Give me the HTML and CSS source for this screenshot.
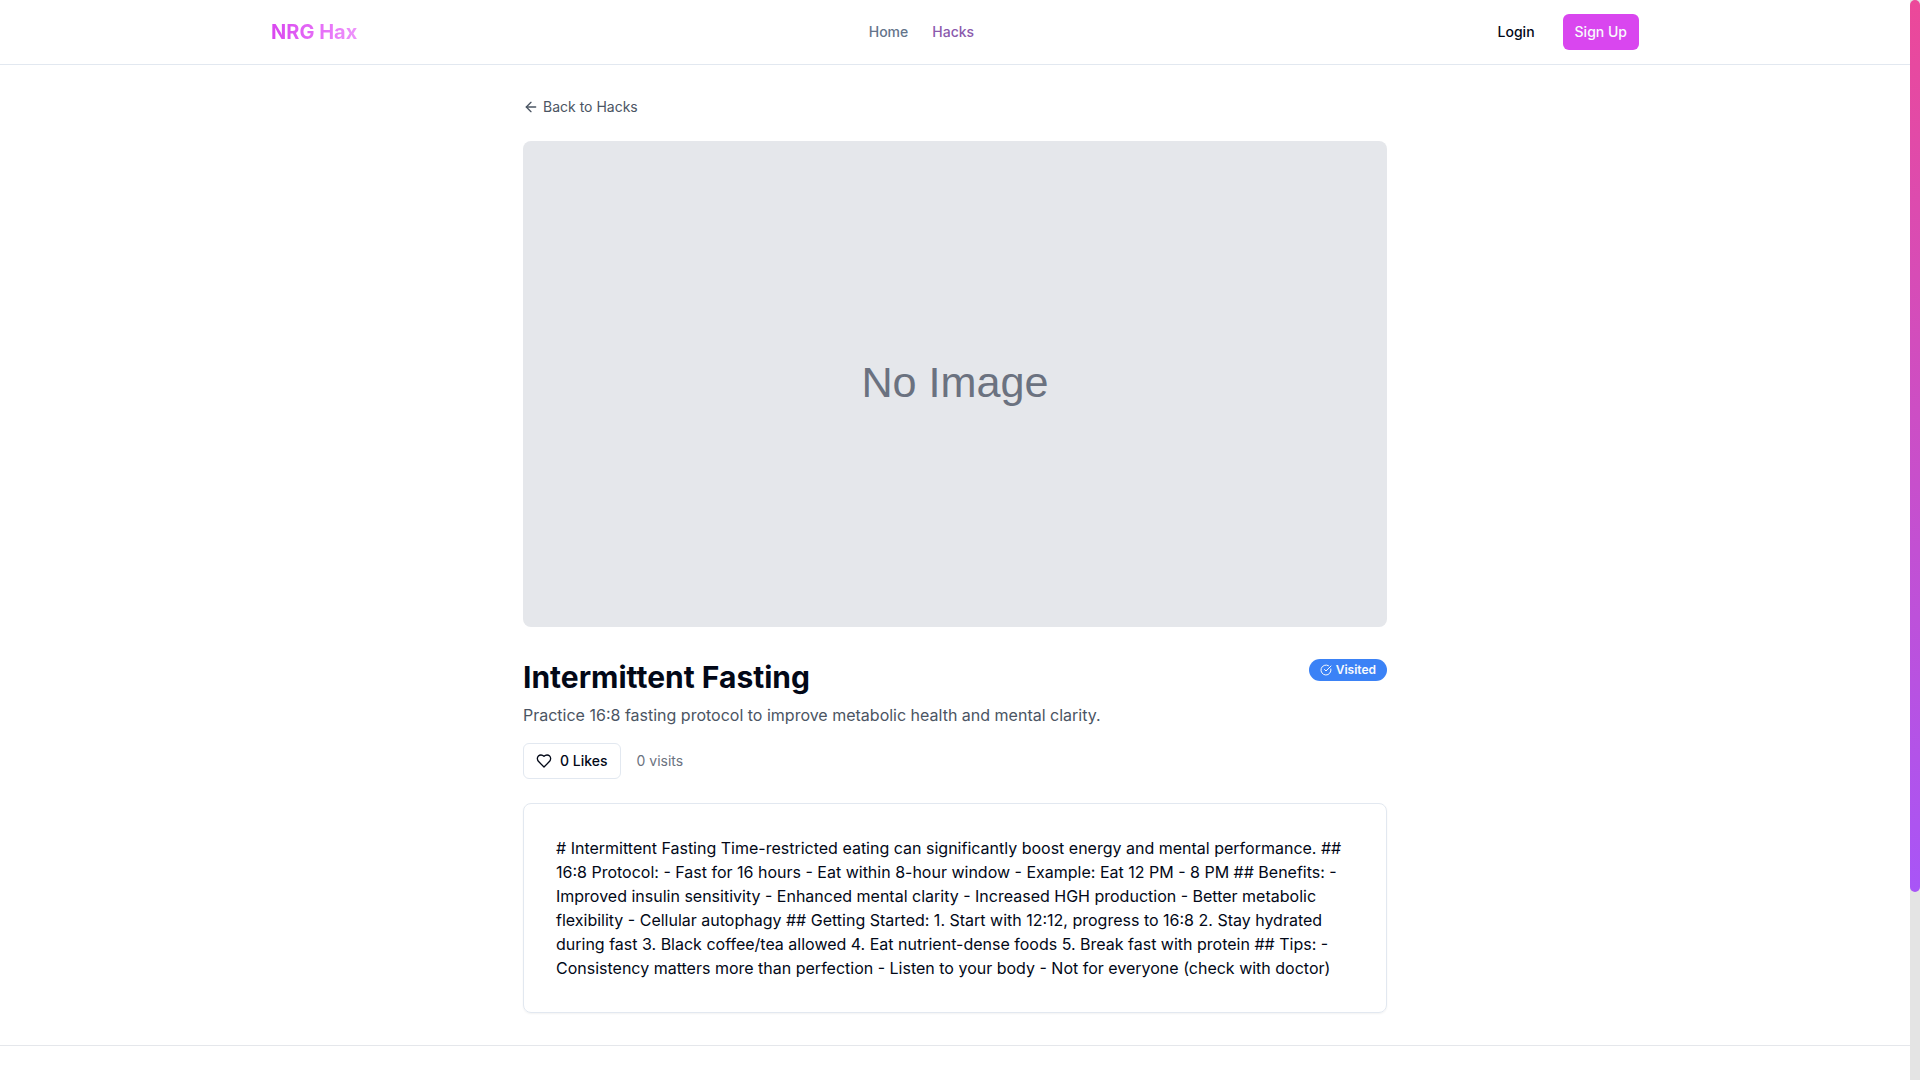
FILE: index.html
```html
<!DOCTYPE html>
<html lang="en">
<head>
  <meta charset="utf-8">
  <meta name="viewport" content="width=device-width, initial-scale=1">
  <title>Intermittent Fasting - NRG Hax</title>
  <link rel="stylesheet" href="styles.css">
</head>
<body>
  <div class="page">
    <header class="site-header">
      <div class="header-inner">
        <a class="logo" href="#">NRG Hax</a>
        <nav class="nav">
          <a class="nav-link" href="#">Home</a>
          <a class="nav-link nav-link-active" href="#">Hacks</a>
        </nav>
        <div class="account">
          <button class="btn btn-ghost" type="button">Login</button>
          <button class="btn btn-primary" type="button">Sign Up</button>
        </div>
      </div>
    </header>

    <main class="content">
      <a class="back-link" href="#">
        <svg class="icon" viewBox="0 0 24 24" aria-hidden="true"><path d="m12 19-7-7 7-7"/><path d="M19 12H5"/></svg>
        Back to Hacks
      </a>

      <svg class="cover" viewBox="0 0 800 450" role="img" aria-label="No Image">
        <rect width="800" height="450" fill="#e5e7eb"/>
        <text class="cover-text" x="400" y="225" dy="12" text-anchor="middle">No Image</text>
      </svg>

      <div class="title-row">
        <div class="title-block">
          <h1 class="title">Intermittent Fasting</h1>
          <p class="summary">Practice 16:8 fasting protocol to improve metabolic health and mental clarity.</p>
        </div>
        <span class="badge">
          <svg class="icon icon-small" viewBox="0 0 24 24" aria-hidden="true"><path d="M21.801 10A10 10 0 1 1 17 3.335"/><path d="m9 11 3 3L22 4"/></svg>
          Visited
        </span>
      </div>

      <div class="stats">
        <button class="btn btn-outline" type="button">
          <svg class="icon" viewBox="0 0 24 24" aria-hidden="true"><path d="M19 14c1.49-1.46 3-3.21 3-5.5A5.5 5.5 0 0 0 16.5 3c-1.76 0-3 .5-4.5 2-1.5-1.5-2.74-2-4.5-2A5.5 5.5 0 0 0 2 8.5c0 2.3 1.5 4.05 3 5.5l7 7Z"/></svg>
          0 Likes
        </button>
        <span class="visits">0 visits</span>
      </div>

      <article class="card">
        <p class="card-text"># Intermittent Fasting Time-restricted eating can significantly boost energy and mental performance. ## 16:8 Protocol: - Fast for 16 hours - Eat within 8-hour window - Example: Eat 12 PM - 8 PM ## Benefits: - Improved insulin sensitivity - Enhanced mental clarity - Increased HGH production - Better metabolic flexibility - Cellular autophagy ## Getting Started: 1. Start with 12:12, progress to 16:8 2. Stay hydrated during fast 3. Black coffee/tea allowed 4. Eat nutrient-dense foods 5. Break fast with protein ## Tips: - Consistency matters more than perfection - Listen to your body - Not for everyone (check with doctor)</p>
      </article>
    </main>

    <footer class="site-footer"></footer>
  </div>
  <div class="scroll-track" aria-hidden="true"><div class="scroll-thumb"></div></div>
</body>
</html>
```
FILE: styles.css
```css
* {
  box-sizing: border-box;
}

body {
  margin: 0;
  display: flex;
  min-height: 100vh;
  font-family: Inter, "Liberation Sans", sans-serif;
  font-size: 16px;
  line-height: 24px;
  color: #020817;
  background: #fff;
}

h1,
p {
  margin: 0;
}

a {
  text-decoration: none;
}

.page {
  flex: 1;
  min-width: 0;
}

/* Header */
.site-header {
  border-bottom: 1px solid #e2e8f0;
}

.header-inner {
  display: flex;
  align-items: center;
  justify-content: space-between;
  max-width: 1400px;
  height: 64px;
  margin: 0 auto;
  padding: 0 16px;
}

.logo {
  font-size: 20px;
  line-height: 28px;
  font-weight: 700;
  color: transparent;
  background: linear-gradient(to right, #d946ef, #f0abfc);
  background: linear-gradient(to right, #d946ef, #e879f9 70%, #ee95fb);
  -webkit-background-clip: text;
  background-clip: text;
}

.nav {
  display: flex;
  gap: 24px;
}

.nav-link {
  font-size: 14px;
  line-height: 20px;
  font-weight: 500;
  color: #64748b;
}

.nav-link-active {
  color: #8b5aad;
}

.account {
  display: flex;
  gap: 16px;
}

/* Buttons */
.btn {
  display: inline-flex;
  align-items: center;
  gap: 8px;
  height: 36px;
  padding: 0 12px;
  border: 0;
  border-radius: 6px;
  font: 500 14px/20px Inter, "Liberation Sans", sans-serif;
  color: #020817;
  background: transparent;
  cursor: pointer;
}

.btn-primary {
  color: #f8fafc;
  background: #d946ef;
}

.btn-outline {
  border: 1px solid #e2e8f0;
  background: #fff;
}

.icon {
  width: 16px;
  height: 16px;
  fill: none;
  stroke: currentColor;
  stroke-width: 2;
  stroke-linecap: round;
  stroke-linejoin: round;
}

.icon-small {
  width: 12px;
  height: 12px;
}

/* Hack detail */
.content {
  max-width: 896px;
  margin: 0 auto;
  padding: 32px 16px;
}

.back-link {
  display: flex;
  align-items: center;
  gap: 4px;
  width: fit-content;
  margin-bottom: 24px;
  font-size: 14px;
  line-height: 20px;
  color: #4b5563;
}

.cover {
  display: block;
  width: 100%;
  margin-bottom: 32px;
  border-radius: 8px;
}

.cover-text {
  font-family: "Liberation Sans", Arial, sans-serif;
  font-size: 40px;
  fill: #6b7280;
}

.title-row {
  display: flex;
  align-items: flex-start;
  justify-content: space-between;
  margin-bottom: 16px;
}

.title {
  margin-bottom: 8px;
  font-size: 30px;
  line-height: 36px;
  font-weight: 700;
}

.summary {
  color: #4b5563;
}

.badge {
  display: inline-flex;
  align-items: center;
  gap: 4px;
  padding: 3px 11px;
  border-radius: 11px;
  font-size: 12px;
  line-height: 16px;
  font-weight: 600;
  color: #f8fafc;
  background: #3b82f6;
}

.stats {
  display: flex;
  align-items: center;
  gap: 16px;
  margin-bottom: 24px;
}

.visits {
  font-size: 14px;
  line-height: 20px;
  color: #6b7280;
}

.card {
  padding: 32px;
  border: 1px solid #e2e8f0;
  border-radius: 8px;
  box-shadow: 0 1px 2px rgba(0, 0, 0, 0.05);
}

.site-footer {
  padding: 16px;
  border-top: 1px solid #e5e7eb;
}

/* Scroll indicator */
.scroll-track {
  position: sticky;
  top: 0;
  width: 10px;
  height: 100vh;
  background: #e4e4e4;
}

.scroll-thumb {
  height: 82.6%;
  border-radius: 5px;
  background: linear-gradient(to bottom, #ec4899, #a855f7);
}
```
